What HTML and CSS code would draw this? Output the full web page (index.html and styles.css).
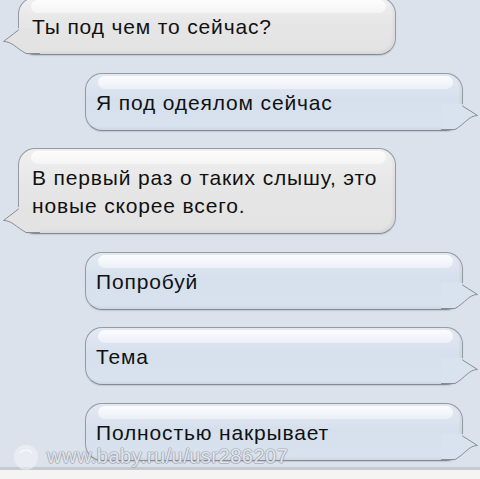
FILE: index.html
```html
<!DOCTYPE html>
<html lang="ru">
<head>
<meta charset="utf-8">
<title>Чат</title>
<link rel="stylesheet" href="styles.css">
</head>
<body>
<div class="screen">
  <div class="chat">
    <div class="bubble in first"><svg class="tail" width="40" height="27" viewBox="0 0 40 27"><path class="tail-fill" d="M18,0 L18.5,2 L3.5,13.5 C12,13.5 16,20 26,25.5 L40,25.5 L40,0 Z"/><path class="tail-line" d="M18.5,2 L3.5,13.5 C12,13.5 16,20 26,25.5 L40,25.5"/></svg><span class="txt">Ты под чем то сейчас?</span></div>
    <div class="bubble out"><svg class="tail" width="40" height="27" viewBox="0 0 40 27"><path class="tail-fill" d="M18,0 L18.5,2 L3.5,11.5 C12,11.5 16,20 26,25.5 L40,25.5 L40,0 Z"/><path class="tail-line" d="M18.5,2 L3.5,11.5 C12,11.5 16,20 26,25.5 L40,25.5"/></svg><span class="txt">Я под одеялом сейчас</span></div>
    <div class="bubble in"><svg class="tail" width="40" height="27" viewBox="0 0 40 27"><path class="tail-fill" d="M18,0 L18.5,2 L3.5,13.5 C12,13.5 16,20 26,25.5 L40,25.5 L40,0 Z"/><path class="tail-line" d="M18.5,2 L3.5,13.5 C12,13.5 16,20 26,25.5 L40,25.5"/></svg><span class="txt">В первый раз о таких слышу, это<br>новые скорее всего.</span></div>
    <div class="bubble out"><svg class="tail" width="40" height="27" viewBox="0 0 40 27"><path class="tail-fill" d="M18,0 L18.5,2 L3.5,11.5 C12,11.5 16,20 26,25.5 L40,25.5 L40,0 Z"/><path class="tail-line" d="M18.5,2 L3.5,11.5 C12,11.5 16,20 26,25.5 L40,25.5"/></svg><span class="txt">Попробуй</span></div>
    <div class="bubble out"><svg class="tail" width="40" height="27" viewBox="0 0 40 27"><path class="tail-fill" d="M18,0 L18.5,2 L3.5,11.5 C12,11.5 16,20 26,25.5 L40,25.5 L40,0 Z"/><path class="tail-line" d="M18.5,2 L3.5,11.5 C12,11.5 16,20 26,25.5 L40,25.5"/></svg><span class="txt">Тема</span></div>
    <div class="bubble out"><svg class="tail" width="40" height="27" viewBox="0 0 40 27"><path class="tail-fill" d="M18,0 L18.5,2 L3.5,11.5 C12,11.5 16,20 26,25.5 L40,25.5 L40,0 Z"/><path class="tail-line" d="M18.5,2 L3.5,11.5 C12,11.5 16,20 26,25.5 L40,25.5"/></svg><span class="txt">Полностью накрывает</span></div>
  </div>
  <div class="bottom-bar"></div>
  <div class="watermark">
    <svg class="wm-logo" width="30" height="30" viewBox="0 0 30 30"><circle cx="15" cy="16" r="12" fill="rgba(255,255,255,0.4)" stroke="rgba(230,232,236,0.9)" stroke-width="1.2"/><path d="M9,12 C12,8 18,8 21,12" fill="none" stroke="rgba(255,255,255,0.7)" stroke-width="1.2"/></svg>
    <span class="wm-text">www.baby.ru/u/usr286207</span>
  </div>
</div>
</body>
</html>
```
FILE: styles.css
```css
html, body {
  margin: 0;
  padding: 0;
}
body {
  width: 480px;
  height: 479px;
  overflow: hidden;
  background: #dbe2ec;
  font-family: "Liberation Sans", Arial, sans-serif;
}
.screen {
  position: relative;
  height: 479px;
  display: grid;
  grid-template-rows: 467px 12px;
}
.chat {
  display: flex;
  flex-direction: column;
  gap: 17.6px;
  overflow: visible;
}
.bubble {
  position: relative;
  box-sizing: border-box;
  width: 378px;
  border: 1px solid #959ba3;
  border-bottom-color: #858b93;
  border-radius: 17px;
  padding: 15px 10px 13px 13px;
  font-size: 21px;
  line-height: 28px;
  letter-spacing: 0.85px;
  color: #111;
  white-space: nowrap;
  box-shadow: inset -2px -2px 3px rgba(0, 0, 0, 0.05), 0 1px 1px rgba(120, 128, 140, 0.25);
}
.bubble::before {
  content: "";
  position: absolute;
  top: 2px;
  left: 12px;
  right: 9px;
  height: 13px;
  border-radius: 8px;
  background: linear-gradient(rgba(255, 255, 255, 0.85), rgba(255, 255, 255, 0.45));
}
.txt {
  position: relative;
  z-index: 1;
}
.first {
  margin-top: -3px;
}
.in {
  align-self: flex-start;
  margin-left: 18px;
  background: linear-gradient(#f0f0f0 0%, #e6e6e6 45%, #e3e3e3 100%);
}
.out {
  align-self: flex-end;
  margin-right: 17px;
  padding-left: 10px;
  background: linear-gradient(#e2e9f3 0%, #d6e0ed 45%, #d9e2ef 100%);
}
.tail {
  position: absolute;
  bottom: -1px;
  left: -19px;
}
.out .tail {
  left: auto;
  right: -19px;
  transform: scaleX(-1);
}
.tail-line {
  fill: none;
  stroke: #878d95;
  stroke-width: 1;
}
.in .tail-fill {
  fill: #e3e3e3;
}
.out .tail-fill {
  fill: #d9e2ef;
}
.bottom-bar {
  border-top: 3px solid #c6c9ce;
  background: #f4f4f4;
}
.watermark {
  position: absolute;
  left: 11px;
  top: 441px;
  display: flex;
  align-items: center;
  gap: 6px;
  z-index: 2;
}
.wm-text {
  font-size: 20px;
  color: rgba(240, 242, 246, 0.85);
  text-shadow: 1px 0 0 rgba(140, 146, 156, 0.55), -1px 0 0 rgba(140, 146, 156, 0.55), 0 1px 0 rgba(140, 146, 156, 0.55), 0 -1px 0 rgba(140, 146, 156, 0.4);
  letter-spacing: 0.5px;
}
```
